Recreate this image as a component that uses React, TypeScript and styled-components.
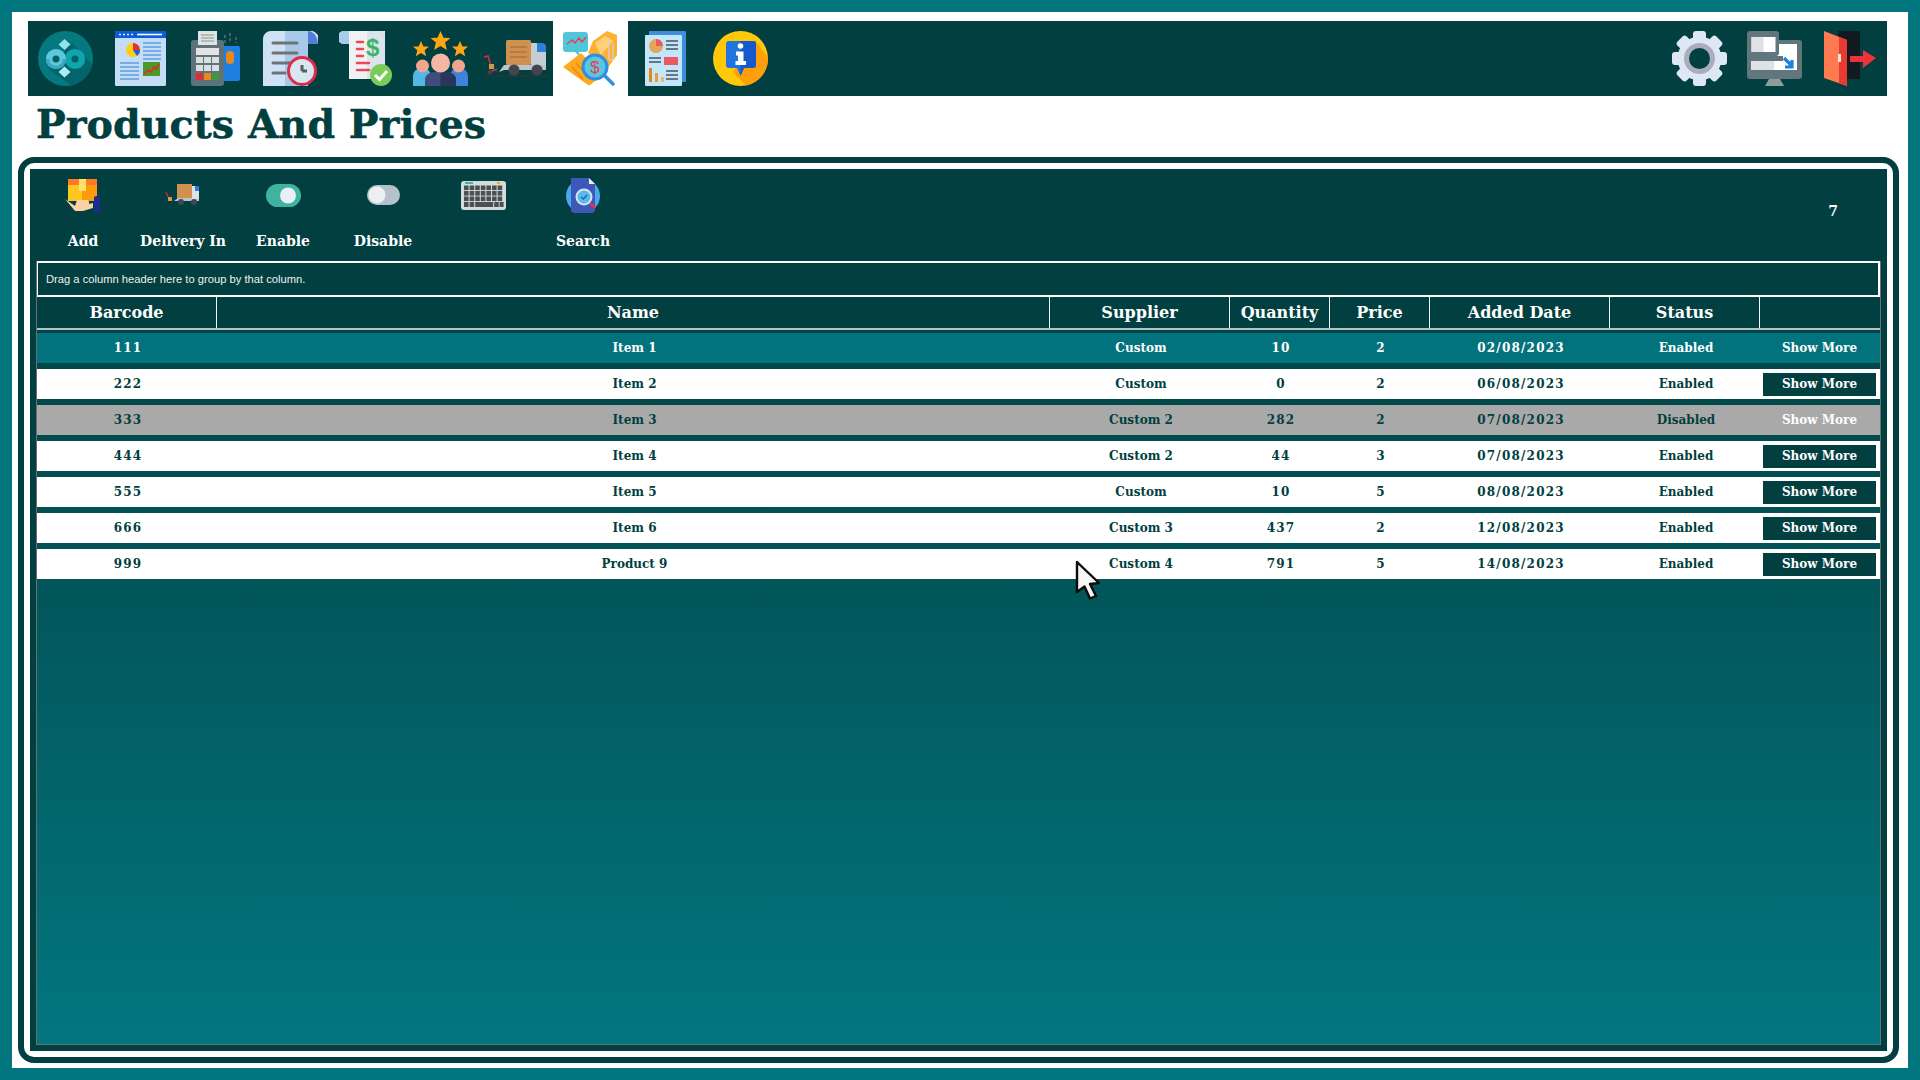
import React from 'react';
import styled, { createGlobalStyle } from 'styled-components';

const DARK = '#023f40';
const TEAL = '#02767f';

const GlobalStyle = createGlobalStyle`
  html, body {
    margin: 0;
    padding: 0;
    background: ${TEAL};
    overflow: hidden;
  }
  * { box-sizing: border-box; }
`;

const LogoIcon = () => (
  <svg width="55" height="55" viewBox="0 0 55 55">
    <circle cx="27.5" cy="27.5" r="27.5" fill="#04797f" />
    <path d="M34 12 L46 24 L54 34 A27.5 27.5 0 0 1 33 54.5 L10 37 Z" fill="#03656b" />
    <path d="M26.5 8 L32.5 13.5 L26.5 19 L20.5 13.5 Z" fill="#8fe3ee" />
    <path d="M26.5 35.5 L32.5 41 L26.5 46.5 L20.5 41 Z" fill="#a9eef5" />
    <circle cx="37" cy="28" r="6.8" fill="#04605f" stroke="#0fa5ad" strokeWidth="6.6" />
    <circle cx="18" cy="28" r="6.8" fill="#04605f" stroke="#5cc8dc" strokeWidth="6.6" />
    <path d="M8 28 A10 10 0 0 0 28 28 L24.8 28 A6.8 6.8 0 0 1 11.2 28 Z" fill="#3aa6c4" />
  </svg>
);

const ReportIcon = () => (
  <svg width="51" height="55" viewBox="0 0 51 55">
    <rect x="0" y="0" width="51" height="55" rx="1.5" fill="#c4dcf5" />
    <rect x="0" y="0" width="51" height="7" fill="#0a5fd8" />
    <path d="M22 3.5 H47" stroke="#fff" strokeWidth="1.6" />
    <path d="M4 3.5 H18" stroke="#dbe8ff" strokeWidth="1.6" strokeDasharray="2 2" />
    <circle cx="18" cy="19" r="7" fill="#ffcd15" />
    <path d="M18 12 A7 7 0 0 1 25 19 L18 19 Z" fill="#d9333f" />
    <path d="M18 19 H25 A7 7 0 0 1 22 25 Z" fill="#2a5fc8" />
    <g stroke="#5a9fe0" strokeWidth="1.4">
      <path d="M28 12 H46 M28 16 H46 M28 20 H46 M28 24 H46 M28 28 H46" />
      <path d="M5 32 H24 M5 36 H24 M5 40 H24 M5 44 H24 M5 48 H24" />
    </g>
    <rect x="28" y="31" width="17" height="14" fill="#4a9a2a" />
    <path d="M29 43 L33 39 L36 41 L39 36 L41 38 L44 33" fill="none" stroke="#e8262f" strokeWidth="1.6" />
  </svg>
);

const PosIcon = () => (
  <svg width="49" height="55" viewBox="0 0 49 55">
    <path d="M34 4 V12 M39 2 V12 M45 6 V12" stroke="#5f7379" strokeWidth="1.4" strokeDasharray="3 2" />
    <rect x="29" y="15" width="20" height="35" rx="2" fill="#1e7fe0" />
    <rect x="35" y="20" width="8" height="13" rx="4" fill="#e8891c" />
    <rect x="0" y="9" width="33" height="46" rx="3" fill="#5d727b" />
    <rect x="7" y="0" width="19" height="14" fill="#dfe3e4" />
    <path d="M10 4 H23 M10 7 H23 M10 10 H23" stroke="#8a9396" strokeWidth="1.2" />
    <rect x="5" y="17" width="23" height="7" fill="#e2e4e5" />
    <g fill="#dcdfe0">
      <rect x="5" y="26" width="7" height="6" /><rect x="13" y="26" width="7" height="6" /><rect x="21" y="26" width="7" height="6" />
      <rect x="5" y="34" width="7" height="6" /><rect x="13" y="34" width="7" height="6" /><rect x="21" y="34" width="7" height="6" />
    </g>
    <rect x="5" y="42" width="7" height="7" fill="#dd2f2f" />
    <rect x="13" y="42" width="7" height="7" fill="#e8891c" />
    <rect x="21" y="42" width="7" height="7" fill="#3d9a3d" />
  </svg>
);

const ClockDocIcon = () => (
  <svg width="55" height="55" viewBox="0 0 55 55">
    <path d="M8 0 H45 A9 9 0 0 1 55 13 H45 V55 H0 V8 A8 8 0 0 1 8 0 Z" fill="#cfe2f5" />
    <path d="M22 0 H45 V55 H22 Z" fill="#a9c9e8" />
    <path d="M45 0 A10 13 0 0 1 55 13 H45 Z" fill="#4f7fd8" />
    <path d="M10 12 H34 M10 22 H34 M10 32 H28 M10 42 H22" stroke="#6f7376" strokeWidth="3" strokeLinecap="round" />
    <circle cx="39" cy="40" r="13.5" fill="#d8e6f2" stroke="#dd2c4a" strokeWidth="3" />
    <path d="M39 40 V34 M39 40 H44" stroke="#5c5f60" strokeWidth="3" />
  </svg>
);

const BillIcon = () => (
  <svg width="53" height="55" viewBox="0 0 53 55">
    <path d="M5 0 H46 V48 H10 V13 H5 A6.5 6.5 0 0 1 5 0 Z" fill="#eef2f5" />
    <path d="M28 0 H42 A4 4 0 0 1 46 4 V48 H28 Z" fill="#dbe4ea" />
    <path d="M5 0 H10 V13 H5 A6.5 6.5 0 0 1 5 0 Z" fill="#a6cdea" />
    <path d="M18 11 H24 M18 18 H24 M18 25 H24 M18 32 H30 M18 39 H30" stroke="#ea4a50" strokeWidth="2.6" strokeLinecap="round" />
    <text x="27" y="25" fontFamily="Liberation Sans, sans-serif" fontWeight="700" fontSize="24" fill="#3fb36a">$</text>
    <circle cx="42" cy="44" r="11" fill="#7bcb5a" />
    <path d="M36 44 L40.5 48.5 L48 40" fill="none" stroke="#fff" strokeWidth="3" />
  </svg>
);

const Star = ({ x, y, s }: { x: number; y: number; s: number }) => (
  <path
    transform={`translate(${x} ${y}) scale(${s})`}
    d="M0 -10 L3 -3.2 L10 -3 L4.6 1.6 L6.4 9 L0 5 L-6.4 9 L-4.6 1.6 L-10 -3 L-3 -3.2 Z"
    fill="#ffa412"
  />
);

const TeamIcon = () => (
  <svg width="55" height="55" viewBox="0 0 55 55">
    <Star x={8} y={18} s={0.8} />
    <Star x={27.5} y={10} s={1} />
    <Star x={47} y={18} s={0.8} />
    <path d="M0 55 V45 A9 8 0 0 1 18 45 V55 Z" fill="#53b8e8" />
    <path d="M37 55 V45 A9 8 0 0 1 55 45 V55 Z" fill="#3f82dc" />
    <circle cx="9.5" cy="35" r="6.5" fill="#eea68f" />
    <circle cx="45.5" cy="35" r="6.5" fill="#eea68f" />
    <path d="M12 55 V47 A10 8 0 0 1 22 41 H33 A10 8 0 0 1 43 47 V55 Z" fill="#3f4d7a" />
    <path d="M27.5 41 H33 A10 8 0 0 1 43 47 V55 H27.5 Z" fill="#2b3558" />
    <circle cx="27.5" cy="32" r="9.5" fill="#f5b7a5" />
  </svg>
);

const TruckIcon = () => (
  <svg width="65" height="38" viewBox="0 0 65 38">
    <path d="M1 17 L5 16 L9 29" fill="none" stroke="#d92b3a" strokeWidth="1.6" />
    <rect x="6" y="24" width="5" height="5" fill="#d8964a" />
    <path d="M7 32 L14 29" stroke="#d92b3a" strokeWidth="1.6" />
    <circle cx="7" cy="32" r="2.5" fill="#3f4347" />
    <path d="M16 32 L21 25 H63 V30 H21" fill="#bcc3cb" />
    <rect x="23" y="0" width="25" height="25" rx="1.5" fill="#d09050" />
    <path d="M27 7 H44 M27 12 H44 M27 17 H44" stroke="#9c6a36" strokeWidth="1" />
    <path d="M48 3 H58 A5 5 0 0 1 63 8 V25 H48 Z" fill="#c6ccd4" />
    <path d="M54 3 H58 A5 5 0 0 1 63 8 V12 H54 Z" fill="#2a80dc" />
    <circle cx="31" cy="30" r="5.5" fill="#43464c" />
    <circle cx="54" cy="30" r="5.5" fill="#43464c" />
    <path d="M1 36 H65" stroke="#5a2c30" strokeWidth="1.2" strokeDasharray="2 1" />
  </svg>
);

const PriceSearchIcon = () => (
  <svg width="55" height="55" viewBox="0 0 55 55">
    <path d="M30 10 L44 0 L54 4 L54 24 L44 38 L25 22 Z" fill="#ffb02e" />
    <path d="M32 12 L42 5 L50 10 L38 24 Z" fill="#ffcf7a" />
    <path d="M46 7 V27 A2 2 0 0 0 50 27 V12" fill="none" stroke="#cfd3d6" strokeWidth="1.3" />
    <path d="M0 36 L18 22 L40 44 L27 54 L25 54 Z" fill="#ffa91f" />
    <path d="M13 32 L24 44 M9 36 L20 48" stroke="#e98a10" strokeWidth="1.4" />
    <path d="M3 1 H22 A3 3 0 0 1 25 4 V18 A3 3 0 0 1 22 21 H16 L16 25 L12 21 H3 A3 3 0 0 1 0 18 V4 A3 3 0 0 1 3 1 Z" fill="#4fc6dc" />
    <path d="M4 13 L9 9 L12 12 L16 7 L19 11 L23 6" fill="none" stroke="#e8404a" strokeWidth="1.5" />
    <path d="M40 43 L50 53" stroke="#2e8fe0" strokeWidth="3.4" strokeLinecap="round" />
    <circle cx="32" cy="36" r="12" fill="#5bc6e0" stroke="#2e8fe0" strokeWidth="3" />
    <text x="32" y="42" textAnchor="middle" fontFamily="Liberation Sans, sans-serif" fontSize="17" fill="#e8404a">$</text>
  </svg>
);

const PaperIcon = () => (
  <svg width="41" height="55" viewBox="0 0 41 55">
    <rect x="4" y="0" width="37" height="51" rx="1" fill="#3d8fdc" />
    <rect x="0" y="4" width="37" height="51" rx="1" fill="#c3e6f8" />
    <circle cx="11" cy="15" r="7" fill="#e6a45e" />
    <path d="M11 8 A7 7 0 0 1 18 15 H11 Z" fill="#ea5a62" />
    <path d="M21 10 H33 M21 14 H33 M21 18 H33 M4 27 H16 M4 31 H16 M21 40 H33 M21 44 H33 M21 48 H33" stroke="#41565e" strokeWidth="1.4" />
    <rect x="19" y="26" width="14" height="8" fill="#ea5a62" />
    <rect x="4" y="37" width="3" height="14" fill="#e8841c" />
    <rect x="10" y="42" width="3" height="9" fill="#ee9a3c" />
    <rect x="16" y="46" width="3" height="5" fill="#f3b46a" />
  </svg>
);

const InfoIcon = () => (
  <svg width="55" height="55" viewBox="0 0 55 55">
    <circle cx="27.5" cy="27.5" r="27.5" fill="#ffc90a" />
    <path d="M42 9 L55 27 A27.5 27.5 0 0 1 33 54.5 L20 41 Z" fill="#ff9f0a" />
    <path d="M16 10 H40 A3 3 0 0 1 43 13 V34 A3 3 0 0 1 40 37 H31 L27.5 45 L24 37 H16 A3 3 0 0 1 13 34 V13 A3 3 0 0 1 16 10 Z" fill="#1f74e0" />
    <path d="M27.5 10 H40 A3 3 0 0 1 43 13 V34 A3 3 0 0 1 40 37 H31 L27.5 45 Z" fill="#1559cc" />
    <circle cx="27.5" cy="15" r="2.8" fill="#fff" />
    <path d="M23 20.5 H30.5 V30 H33 V34 H22.5 V30 H25 V24.5 H23 Z" fill="#fff" />
  </svg>
);

const GearIcon = () => (
  <svg width="55" height="55" viewBox="0 0 55 55">
    <g fill="#dde8f4">
      <rect x="21" y="0" width="13" height="55" rx="3" />
      <rect x="21" y="0" width="13" height="55" rx="3" transform="rotate(45 27.5 27.5)" />
      <rect x="21" y="0" width="13" height="55" rx="3" transform="rotate(90 27.5 27.5)" />
      <rect x="21" y="0" width="13" height="55" rx="3" transform="rotate(135 27.5 27.5)" />
    </g>
    <circle cx="27.5" cy="27.5" r="22" fill="#dde8f4" />
    <circle cx="27.5" cy="27.5" r="13" fill={DARK} stroke="#a9adbd" strokeWidth="5" />
  </svg>
);

const DisplayIcon = () => (
  <svg width="55" height="55" viewBox="0 0 55 55">
    <path d="M18 55 L22 48 H33 L37 55 Z" fill="#8e9ca0" />
    <rect x="0" y="9" width="55" height="39" rx="3" fill="#62767e" />
    <rect x="4" y="13" width="46" height="26" fill="#fff" />
    <rect x="4" y="30" width="23" height="9" fill="#dfe2e4" />
    <rect x="0" y="0" width="32" height="25" rx="3" fill="#62767e" />
    <rect x="0" y="25" width="36" height="5" fill="#62767e" />
    <rect x="4.5" y="6" width="24" height="15" fill="#fff" />
    <rect x="4.5" y="6" width="12" height="15" fill="#dfe2e4" />
    <path d="M37 27 L45 35 M45 29 V36 H38" fill="none" stroke="#1e82dc" strokeWidth="3.2" />
  </svg>
);

const ExitIcon = () => (
  <svg width="52" height="55" viewBox="0 0 52 55">
    <rect x="14" y="0" width="22" height="48" fill="#111a1e" />
    <path d="M26 14 H39 V8 L52 16 L39 26 V20 H26 Z" fill="#f0303a" transform="translate(0 11)" />
    <path d="M0 0 L23 9 V55 L0 47 Z" fill="#ff7a50" />
    <path d="M15 6 L23 9 V55 L15 52 Z" fill="#e83a30" />
    <rect x="14" y="23" width="3" height="8" fill="#f6e8d8" />
  </svg>
);

const BoxHandIcon = () => (
  <svg width="36" height="33" viewBox="0 0 36 33">
    <rect x="3" y="0" width="29" height="22" fill="#ff9a0a" />
    <rect x="3" y="0" width="14" height="22" fill="#ffc81e" />
    <rect x="3" y="0" width="29" height="6" fill="#ff7a28" />
    <rect x="14" y="0" width="7" height="12" fill="#ffe06a" />
    <path d="M0 20 L10 27 L12 21 H22 A3 3 0 0 1 24 25 L28 24 V29 L18 32 H10 Z" fill="#f8d2a2" />
    <rect x="29" y="17" width="6" height="16" rx="2" fill="#1c2d90" />
  </svg>
);

const TruckMiniIcon = () => (
  <svg width="36" height="22" viewBox="0 0 36 22">
    <path d="M1 8 L4 15" stroke="#d92b3a" strokeWidth="1.2" />
    <rect x="3" y="13" width="4" height="4" fill="#d8964a" />
    <rect x="12" y="0" width="15" height="15" fill="#d09050" />
    <path d="M9 17 L13 14 H34 V17 Z" fill="#bcc3cb" />
    <path d="M27 2 H34 V15 H27 Z" fill="#dfe3e8" />
    <path d="M30 2 H34 V7 H30 Z" fill="#2a80dc" />
    <circle cx="16" cy="18" r="3" fill="#43464c" />
    <circle cx="29" cy="18" r="3" fill="#43464c" />
  </svg>
);

const ToggleOnIcon = () => (
  <svg width="35" height="23" viewBox="0 0 35 23">
    <rect x="0" y="0" width="35" height="23" rx="11.5" fill="#3fb3a0" />
    <circle cx="22" cy="11.5" r="8" fill="#eceef6" />
  </svg>
);

const ToggleOffIcon = () => (
  <svg width="33" height="20" viewBox="0 0 33 20">
    <rect x="0" y="0" width="33" height="20" rx="10" fill="#b4c3cb" />
    <circle cx="10" cy="10" r="8.5" fill="#eceef2" />
  </svg>
);

const KeyboardIcon = () => (
  <svg width="45" height="29" viewBox="0 0 45 29">
    <rect x="0" y="0" width="45" height="29" rx="3" fill="#d5dadb" />
    <rect x="4" y="1" width="8" height="2" fill="#39b8a6" />
    <rect x="36" y="1" width="3" height="2" fill="#f4a91c" />
    <g fill="#4b5050">
      {[0, 1, 2, 3, 4, 5, 6].map((i) => <rect key={`a${i}`} x={3 + i * 5.6} y="4.5" width="4.6" height="4.6" />)}
      {[0, 1, 2, 3, 4, 5, 6].map((i) => <rect key={`b${i}`} x={3 + i * 5.6} y="10" width="4.6" height="4.6" />)}
      {[0, 1, 2, 3, 4, 5, 6].map((i) => <rect key={`c${i}`} x={3 + i * 5.6} y="15.5" width="4.6" height="4.6" />)}
      <rect x="3" y="21" width="4.6" height="5" />
      <rect x="8.6" y="21" width="4.6" height="5" />
      <rect x="14.2" y="21" width="18" height="5" />
      <rect x="33.2" y="21" width="4.6" height="5" />
      <rect x="38.6" y="21" width="4" height="5" />
    </g>
  </svg>
);

const SearchDocIcon = () => (
  <svg width="34" height="35" viewBox="0 0 34 35">
    <circle cx="17" cy="18" r="17" fill="#4da8e8" />
    <path d="M5 0 H23 L29 6 V33 A17 17 0 0 1 5 33 Z" fill="#3d58b8" />
    <path d="M23 0 L29 6 H23 Z" fill="#eef2f8" />
    <circle cx="18" cy="19" r="7.5" fill="#5cb8ea" stroke="#cfe6f6" strokeWidth="2" />
    <path d="M15 19 L17.5 21 L21 17" fill="none" stroke="#1c5ec4" strokeWidth="1.3" />
    <path d="M24 25 L29 30" stroke="#e8304a" strokeWidth="2.6" />
  </svg>
);

const Pointer = () => (
  <svg width="28" height="40" viewBox="0 0 28 40">
    <path
      d="M3 2 L25 23 L16 24 L22 36 L16 38.5 L10.5 26.5 L3 32 Z"
      fill="#f6f6f6"
      stroke="#0b0b0b"
      strokeWidth="2.4"
      strokeLinejoin="round"
    />
  </svg>
);

const Screen = styled.div`
  position: relative;
  width: 1920px;
  height: 1080px;
  padding: 12px;
  background: ${TEAL};
  overflow: hidden;
`;

const Sheet = styled.div`
  display: flex;
  flex-direction: column;
  height: 1056px;
  padding: 9px 9px 5px 6px;
  background: #fff;
`;

const NavBar = styled.nav`
  display: flex;
  flex: none;
  height: 75px;
  margin: 0 12px 0 10px;
  background: ${DARK};
`;

const NavTab = styled.div<{ $active?: boolean }>`
  display: flex;
  flex: none;
  align-items: center;
  justify-content: center;
  width: 75px;
  height: 75px;
  background: ${(p) => (p.$active ? '#fff' : 'transparent')};
`;

const NavSpacer = styled.div`
  flex: 1;
`;

const PageTitle = styled.h1`
  flex: none;
  height: 61px;
  margin: 0;
  padding: 3px 0 0 18px;
  font-family: "DejaVu Serif", serif;
  font-weight: 700;
  font-size: 39.6px;
  line-height: 50px;
  color: ${DARK};
  -webkit-text-stroke: 0.5px ${DARK};
`;

const Panel = styled.section`
  display: flex;
  flex: 1;
  flex-direction: column;
  border: 6px solid ${DARK};
  border-radius: 16px;
  padding: 6px;
  background: #fff;
`;

const PanelBody = styled.div`
  display: flex;
  flex: 1;
  flex-direction: column;
  padding: 0 6px 6px;
  background: ${DARK};
`;

const Toolbar = styled.div`
  display: flex;
  flex: none;
  align-items: flex-start;
  height: 92px;
  margin-left: -3px;
`;

const ToolButton = styled.div`
  display: flex;
  flex: none;
  flex-direction: column;
  align-items: center;
  width: 100px;
  height: 92px;
  color: #fff;
  font-family: "DejaVu Serif", serif;
  font-weight: 700;
  font-size: 14px;
`;

const ToolIconBox = styled.div`
  display: flex;
  align-items: center;
  justify-content: center;
  height: 36px;
  margin-top: 8px;
`;

const ToolLabel = styled.div`
  margin-top: 16px;
  height: 24px;
  line-height: 24px;
  white-space: nowrap;
`;

const RecordCount = styled.div`
  margin: 32px 0 0 auto;
  padding-right: 43px;
  color: #fff;
  font-family: "DejaVu Serif", serif;
  font-weight: 700;
  font-size: 14px;
  line-height: 20px;
`;

const Grid = styled.div`
  display: flex;
  flex: 1;
  flex-direction: column;
  border: 1px solid #6e6e6e;
  border-top: 0;
  background: linear-gradient(180deg, ${DARK} 0%, ${TEAL} 100%);
`;

const GroupPanel = styled.div`
  flex: none;
  height: 36px;
  border: 2px solid #fff;
  border-left-width: 1px;
  padding-left: 8px;
  background: ${DARK};
  color: #f0f0f0;
  font-family: "Liberation Sans", sans-serif;
  font-size: 11.2px;
  line-height: 33px;
`;

const HeaderRow = styled.div`
  display: grid;
  flex: none;
  grid-template-columns: 180px 833px 180px 100px 100px 180px 150px 120px;
  height: 33px;
  border-bottom: 2px solid #b4c4c4;
  background: ${DARK};
`;

const HeaderCell = styled.div`
  border-right: 1px solid #fff;
  color: #fff;
  font-family: "DejaVu Serif", serif;
  font-weight: 700;
  font-size: 16px;
  line-height: 31px;
  text-align: center;
  white-space: nowrap;
  overflow: hidden;

  &:last-child {
    border-right: 0;
  }
`;

const Rows = styled.div`
  display: flex;
  flex-direction: column;
  gap: 6px;
  padding-top: 3px;
`;

const Row = styled.div<{ $kind: 'selected' | 'normal' | 'off' }>`
  display: grid;
  grid-template-columns: 180px 833px 180px 100px 100px 180px 150px 120px;
  align-items: center;
  height: 30px;
  background: ${(p) => (p.$kind === 'selected' ? '#02737c' : p.$kind === 'off' ? '#a9a9a9' : '#fff')};
  color: ${(p) => (p.$kind === 'selected' ? '#fff' : DARK)};
  font-family: "DejaVu Serif", serif;
  font-weight: 700;
  font-size: 12px;
`;

const Cell = styled.div<{ $numeric: boolean }>`
  padding-left: 2px;
  text-align: center;
  white-space: nowrap;
  letter-spacing: ${(p) => (p.$numeric ? '1.2px' : '0')};
`;

const ShowMore = styled.button<{ $plain: boolean }>`
  display: block;
  width: 113px;
  height: 23px;
  margin: 0 0 0 3px;
  border: 0;
  padding: 0;
  background: ${(p) => (p.$plain ? 'transparent' : DARK)};
  color: #fff;
  font-family: "DejaVu Serif", serif;
  font-weight: 700;
  font-size: 12px;
`;

const PointerLayer = styled.div`
  position: absolute;
  left: 1074px;
  top: 560px;
  line-height: 0;
`;

const leftTabs = [
  <LogoIcon />, <ReportIcon />, <PosIcon />, <ClockDocIcon />, <BillIcon />,
  <TeamIcon />, <TruckIcon />, <PriceSearchIcon />, <PaperIcon />, <InfoIcon />,
];

const tools = [
  { label: 'Add', icon: <BoxHandIcon /> },
  { label: 'Delivery In', icon: <TruckMiniIcon /> },
  { label: 'Enable', icon: <ToggleOnIcon /> },
  { label: 'Disable', icon: <ToggleOffIcon /> },
  { label: '', icon: <KeyboardIcon /> },
  { label: 'Search', icon: <SearchDocIcon /> },
];

const columns = ['Barcode', 'Name', 'Supplier', 'Quantity', 'Price', 'Added Date', 'Status', ''];

const numericColumns = [0, 3, 4, 5];

const products: { cells: string[]; kind: 'selected' | 'normal' | 'off' }[] = [
  { cells: ['111', 'Item 1', 'Custom', '10', '2', '02/08/2023', 'Enabled'], kind: 'selected' },
  { cells: ['222', 'Item 2', 'Custom', '0', '2', '06/08/2023', 'Enabled'], kind: 'normal' },
  { cells: ['333', 'Item 3', 'Custom 2', '282', '2', '07/08/2023', 'Disabled'], kind: 'off' },
  { cells: ['444', 'Item 4', 'Custom 2', '44', '3', '07/08/2023', 'Enabled'], kind: 'normal' },
  { cells: ['555', 'Item 5', 'Custom', '10', '5', '08/08/2023', 'Enabled'], kind: 'normal' },
  { cells: ['666', 'Item 6', 'Custom 3', '437', '2', '12/08/2023', 'Enabled'], kind: 'normal' },
  { cells: ['999', 'Product 9', 'Custom 4', '791', '5', '14/08/2023', 'Enabled'], kind: 'normal' },
];

export default function App() {
  return (
    <Screen>
      <GlobalStyle />
      <Sheet>
        <NavBar>
          {leftTabs.map((icon, i) => (
            <NavTab key={i} $active={i === 7}>{icon}</NavTab>
          ))}
          <NavSpacer />
          <NavTab><GearIcon /></NavTab>
          <NavTab><DisplayIcon /></NavTab>
          <NavTab><ExitIcon /></NavTab>
        </NavBar>
        <PageTitle>Products And Prices</PageTitle>
        <Panel>
          <PanelBody>
            <Toolbar>
              {tools.map((tool, i) => (
                <ToolButton key={i}>
                  <ToolIconBox>{tool.icon}</ToolIconBox>
                  <ToolLabel>{tool.label}</ToolLabel>
                </ToolButton>
              ))}
              <RecordCount>7</RecordCount>
            </Toolbar>
            <Grid>
              <GroupPanel>Drag a column header here to group by that column.</GroupPanel>
              <HeaderRow>
                {columns.map((c, i) => <HeaderCell key={i}>{c}</HeaderCell>)}
              </HeaderRow>
              <Rows>
                {products.map((p) => (
                  <Row key={p.cells[0]} $kind={p.kind}>
                    {p.cells.map((c, i) => (
                      <Cell key={i} $numeric={numericColumns.includes(i)}>{c}</Cell>
                    ))}
                    <ShowMore $plain={p.kind !== 'normal'}>Show More</ShowMore>
                  </Row>
                ))}
              </Rows>
            </Grid>
          </PanelBody>
        </Panel>
      </Sheet>
      <PointerLayer><Pointer /></PointerLayer>
    </Screen>
  );
}
